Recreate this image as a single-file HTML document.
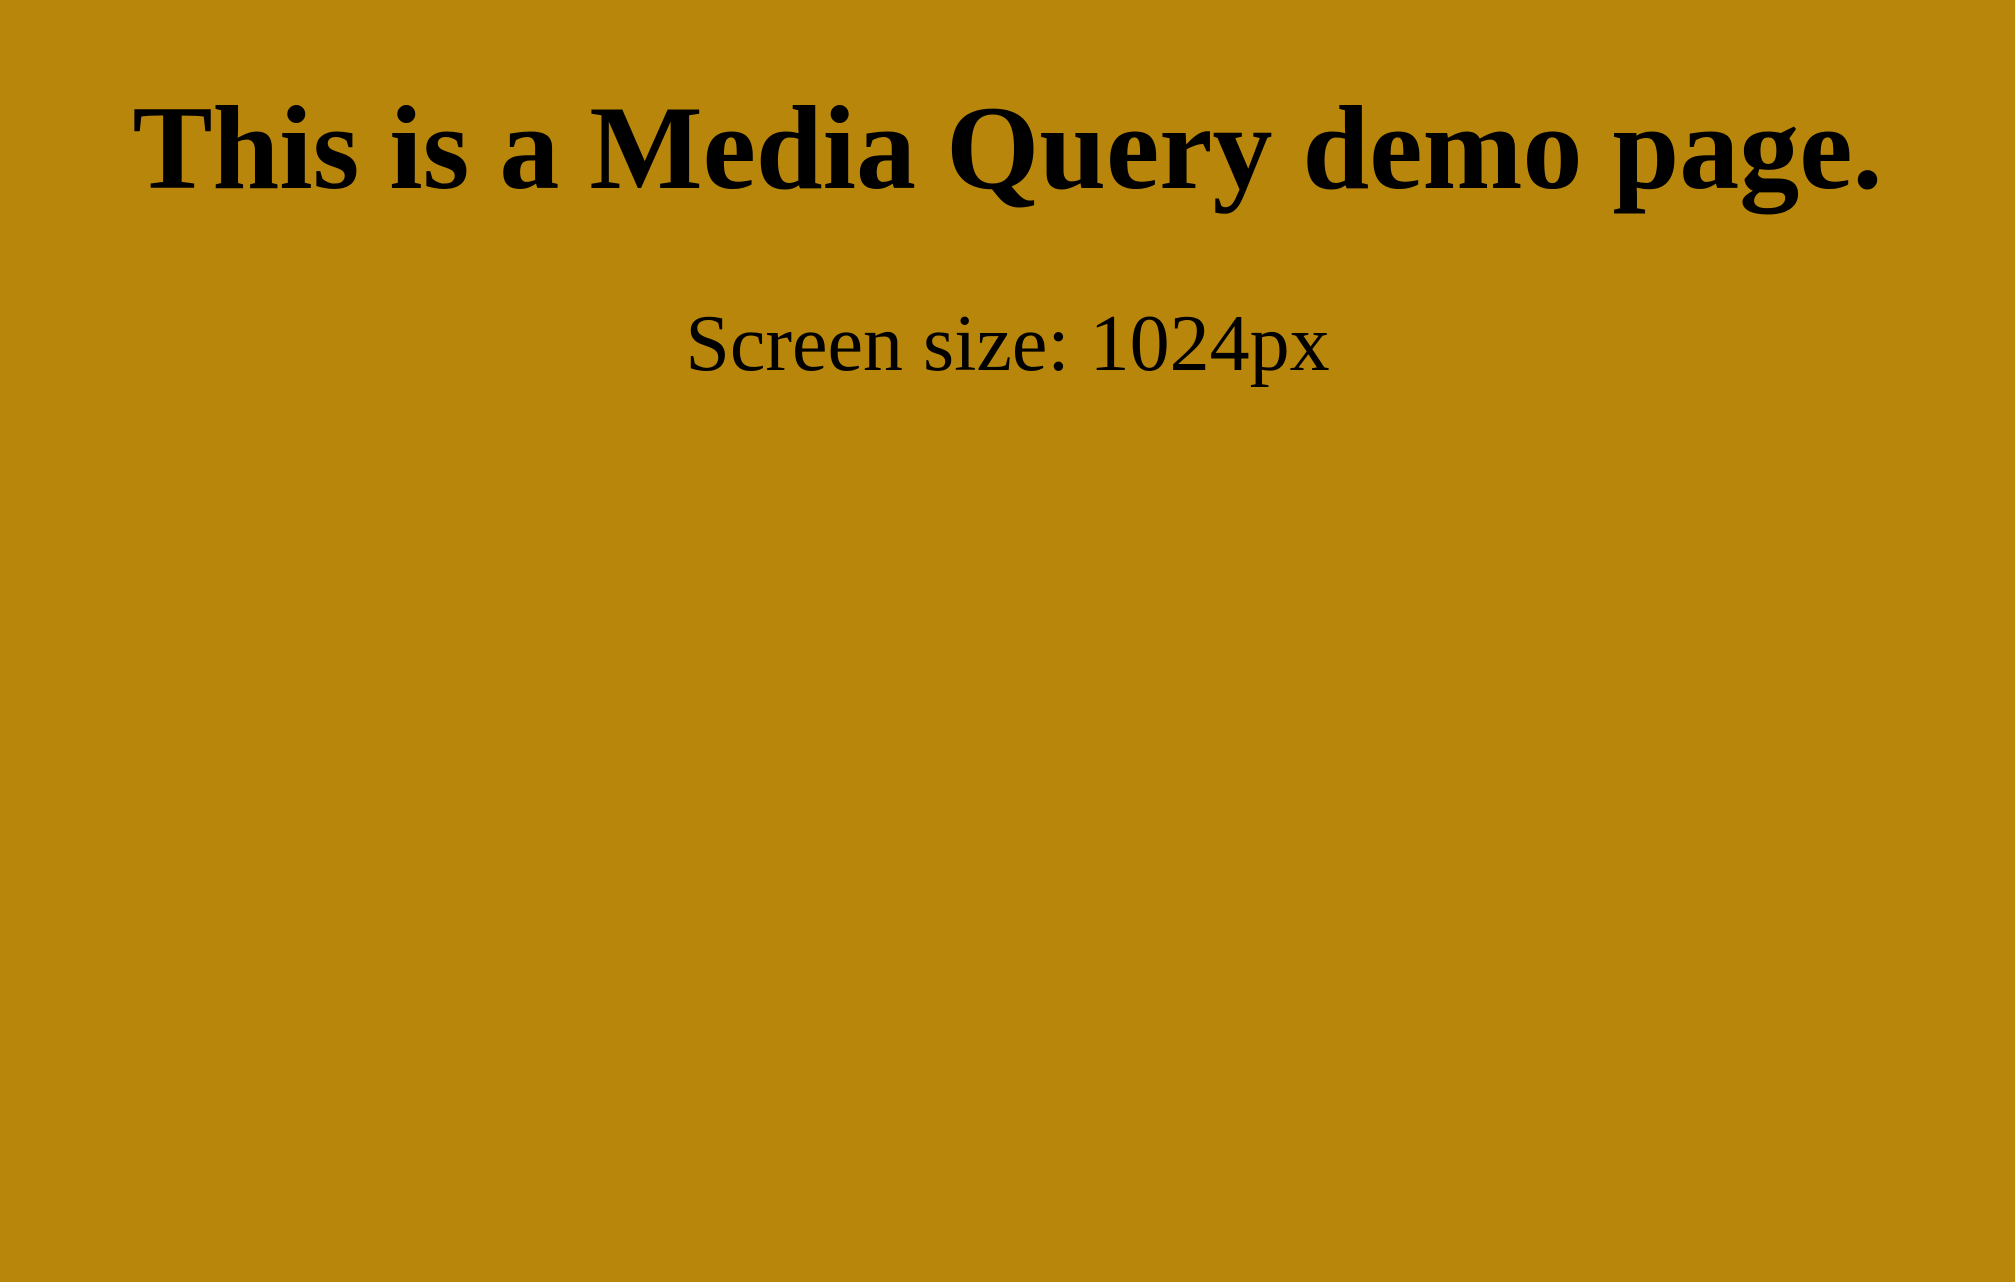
<!DOCTYPE html>
<html><head><meta charset="utf-8"><style>
html,body{margin:0;padding:0;width:2015px;height:1282px;background:#b8860b;overflow:hidden;font-family:"Liberation Serif",serif;color:#000}
.h{position:absolute;left:0;width:2015px;text-align:center;top:88px;font-size:120px;line-height:120px;font-weight:bold;white-space:nowrap}
.s{position:absolute;left:0;width:2015px;text-align:center;top:304px;font-size:80px;line-height:80px;white-space:nowrap}
</style></head><body>
<div class="h">This is a Media Query demo page.</div>
<div class="s">Screen size: 1024px</div>
</body></html>
